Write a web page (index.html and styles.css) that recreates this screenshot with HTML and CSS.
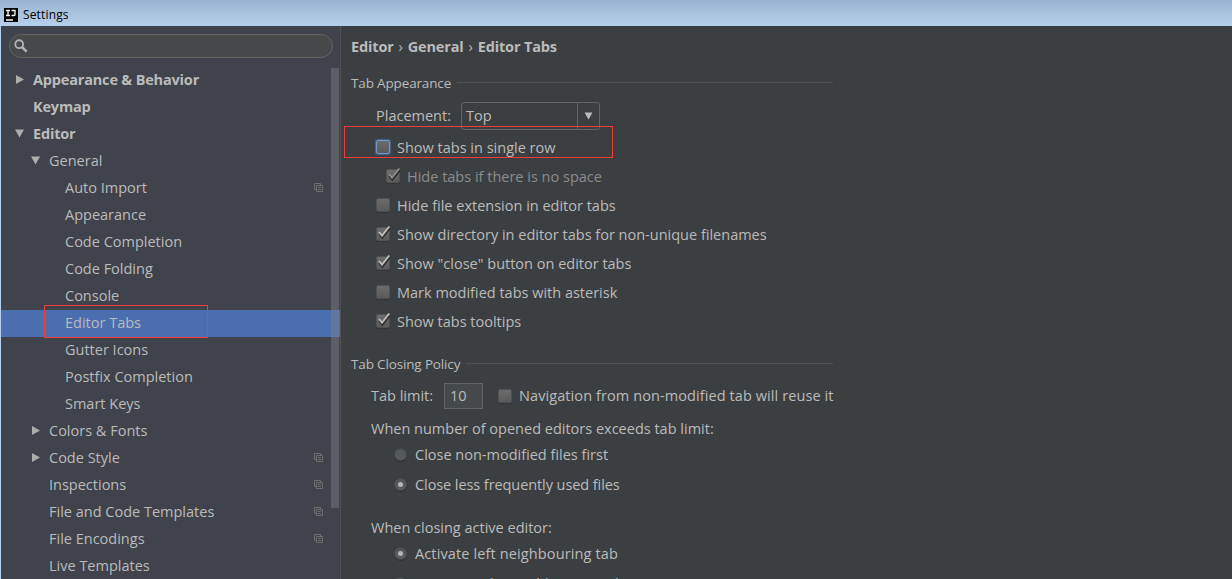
FILE: index.html
```
<!DOCTYPE html>
<html lang="en">
<head>
<meta charset="utf-8">
<title>Settings</title>
<link rel="stylesheet" href="styles.css">
</head>
<body>
<svg class="defs" width="0" height="0">
  <symbol id="copy" viewBox="0 0 9 9"><path d="M6.500 2V.5h-6v6H2M2.500 2.500h6v6h-6zM4 4.500h3M4 6.500h3" fill="none" stroke="currentColor"/></symbol>
  <symbol id="right" viewBox="0 0 9 9"><path d="M1 0v9L9 4.500z" fill="currentColor"/></symbol>
  <symbol id="down" viewBox="0 0 9 9"><path d="M0 .5h9L4.500 8.500z" fill="currentColor"/></symbol>
  <symbol id="tick" viewBox="0 0 16 16"><path d="M4 7.500l3 3.700L14.300 2" fill="none" stroke="#2b2b2b" stroke-width="2.200" transform="translate(.3 1.200)"/><path d="M4 7l3 3.700L14.300 1.500" fill="none" stroke="currentColor" stroke-width="1.900"/></symbol>
</svg>
<header class="titlebar">
  <svg class="logo" width="14" height="14" viewBox="0 0 14 14"><path d="M0 0h14v14H0z" fill="#000"/><path d="M2 2.500h4M4 2v6M2 7.500h4M7.500 2.500h3.500v4q0 1-1 1H7.500M2 12h7" fill="none" stroke="#fff" stroke-width="1.300"/></svg>
  <span>Settings</span>
</header>
<main class="window">
  <aside class="sidebar">
    <div class="search"><svg width="14" height="14" viewBox="0 0 14 14"><circle cx="5.200" cy="5.200" r="3.900" fill="none" stroke="#afb1b3" stroke-width="1.900"/><path d="M8 8l4.600 4.600" stroke="#afb1b3" stroke-width="2.500"/></svg></div>
    <nav class="tree">
      <div class="row top"><svg class="arrow"><use href="#right"/></svg><span>Appearance &amp; Behavior</span></div>
      <div class="row top"><i class="arrow"></i><span>Keymap</span></div>
      <div class="row top"><svg class="arrow"><use href="#down"/></svg><span>Editor</span></div>
      <div class="row mid"><svg class="arrow"><use href="#down"/></svg><span>General</span></div>
      <div class="row leaf"><span>Auto Import</span><svg class="copy"><use href="#copy"/></svg></div>
      <div class="row leaf"><span>Appearance</span></div>
      <div class="row leaf"><span>Code Completion</span></div>
      <div class="row leaf"><span>Code Folding</span></div>
      <div class="row leaf"><span>Console</span></div>
      <div class="row leaf selected"><span>Editor Tabs</span><b class="mark mark-tree"></b></div>
      <div class="row leaf"><span>Gutter Icons</span></div>
      <div class="row leaf"><span>Postfix Completion</span></div>
      <div class="row leaf"><span>Smart Keys</span></div>
      <div class="row mid"><svg class="arrow"><use href="#right"/></svg><span>Colors &amp; Fonts</span></div>
      <div class="row mid"><svg class="arrow"><use href="#right"/></svg><span>Code Style</span><svg class="copy"><use href="#copy"/></svg></div>
      <div class="row mid"><i class="arrow"></i><span>Inspections</span><svg class="copy"><use href="#copy"/></svg></div>
      <div class="row mid"><i class="arrow"></i><span>File and Code Templates</span><svg class="copy"><use href="#copy"/></svg></div>
      <div class="row mid"><i class="arrow"></i><span>File Encodings</span><svg class="copy"><use href="#copy"/></svg></div>
      <div class="row mid"><i class="arrow"></i><span>Live Templates</span></div>
    </nav>
    <div class="scrollbar"></div>
  </aside>
  <section class="content">
    <h1 class="crumbs">Editor <em>›</em> General <em>›</em> Editor Tabs</h1>
    <h2 class="group">Tab Appearance</h2>
    <div class="placement"><label>Placement:</label><div class="combo"><span>Top</span><div class="combo-btn"><svg width="9" height="8" viewBox="0 0 9 9"><use href="#down"/></svg></div></div></div>
    <div class="option"><i class="box focus"></i><span>Show tabs in single row</span><b class="mark mark-option"></b></div>
    <div class="option nested"><i class="box"><svg><use href="#tick"/></svg></i><span>Hide tabs if there is no space</span></div>
    <div class="option"><i class="box"></i><span>Hide file extension in editor tabs</span></div>
    <div class="option"><i class="box"><svg><use href="#tick"/></svg></i><span>Show directory in editor tabs for non-unique filenames</span></div>
    <div class="option"><i class="box"><svg><use href="#tick"/></svg></i><span>Show "close" button on editor tabs</span></div>
    <div class="option"><i class="box"></i><span>Mark modified tabs with asterisk</span></div>
    <div class="option"><i class="box"><svg><use href="#tick"/></svg></i><span>Show tabs tooltips</span></div>
    <h2 class="group closing">Tab Closing Policy</h2>
    <div class="limit"><label>Tab limit:</label><div class="field">10</div><i class="box"></i><span class="navigation">Navigation from non-modified tab will reuse it</span></div>
    <p class="question">When number of opened editors exceeds tab limit:</p>
    <div class="radio-row"><i class="radio"></i><span>Close non-modified files first</span></div>
    <div class="radio-row second"><i class="radio on"></i><span class="less">Close less frequently used files</span></div>
    <p class="question later">When closing active editor:</p>
    <div class="radio-row"><i class="radio on"></i><span class="left">Activate left neighbouring tab</span></div>
    <div class="radio-row second"><i class="radio"></i><span>Activate right neighbouring tab</span></div>
  </section>
</main>
</body>
</html>
```
FILE: styles.css
```
* { box-sizing: border-box; }
body { margin: 0; width: 1232px; height: 579px; overflow: hidden; background: #3c3f41; color: #bbb; font: 14.500px/20px "Open Sans", "Noto Sans", sans-serif; white-space: nowrap; }
.defs { display: block; height: 0; }
.titlebar { height: 26px; display: flex; align-items: center; gap: 5px; padding: 3px 0 0 4px; background: linear-gradient(#9ab3d0, #b7d0ea); color: #000; font-size: 12px; letter-spacing: .15px; }
.window { display: flex; height: 553px; overflow: hidden; border-left: 1px solid #b5d0ec; }
.sidebar { position: relative; width: 340px; flex: none; background: #40434b; border-right: 1px solid #515151; padding-top: 8px; }
.search { height: 24px; width: 324px; margin-left: 8px; border: 1px solid #646464; border-radius: 12px; background: #45494a; display: flex; align-items: center; padding-left: 4px; }
.tree { margin-top: 9px; }
.row { position: relative; height: 27px; display: flex; align-items: center; padding-bottom: 1px; }
.top { padding-left: 14px; font-weight: 700; letter-spacing: -.18px; }
.mid { padding-left: 30px; }
.leaf { padding-left: 64px; }
.arrow { width: 9px; height: 9px; margin: -1px 9px 0 0; flex: none; color: #adadad; }
.copy { width: 9px; height: 9px; margin: -2px 17px 0 auto; color: #6e6e6e; }
.selected { background: #4b6eaf; }
.scrollbar { position: absolute; right: 1px; top: 42px; width: 8px; height: 440px; background: rgba(130, 130, 140, .42); }
.mark { position: absolute; border: 1px solid #f23b3b; }
.mark-tree { left: 43px; top: -5px; width: 164px; height: 33px; }
.content { flex: 1; padding: 11px 0 0 10px; }
.crumbs { margin: 0; font-size: 14.500px; line-height: 20px; letter-spacing: -.15px; }
.crumbs em { font-style: normal; font-weight: 400; margin: 0 1.300px; }
.group { margin: 16px 0 0; width: 482px; display: flex; align-items: center; gap: 6px; font-size: 13.500px; font-weight: 400; line-height: 20px; letter-spacing: -.15px; }
.group::after { content: ""; flex: 1; height: 1px; margin-top: -2px; background: #515151; }
.closing { margin-top: 18px; }
.placement { display: flex; align-items: center; height: 28px; margin: 9px 0 3px 25px; }
.placement label { width: 85px; }
.combo { width: 139px; height: 28px; border: 1px solid #646464; border-radius: 3px; display: flex; align-items: center; padding-left: 4px; }
.combo span { flex: 1; }
.combo-btn { width: 22px; height: 26px; border-left: 1px solid #646464; display: flex; align-items: center; justify-content: center; padding-right: 1px; }
.option { position: relative; height: 29px; display: flex; align-items: center; gap: 7px; padding-left: 25px; }
.nested { padding-left: 35px; color: #8c8c8c; }
.box { position: relative; flex: none; width: 14px; height: 14px; border-radius: 2px; background: linear-gradient(#6c6c6c, #5a5a5a); border: 1px solid #505152; box-shadow: 0 1px 0 #323435; }
.option .box { margin-top: -1px; }
.box svg { position: absolute; left: -2px; top: -3px; width: 16px; height: 16px; color: #bbb; }
.nested .box svg { color: #8c8c8c; }
.focus { border-color: #6d9cc8; box-shadow: 0 0 1px 1px #44668e; }
.mark-option { left: -7px; top: -7px; width: 269px; height: 32px; }
.limit { display: flex; align-items: center; height: 26px; margin: 9px 0 0 20px; }
.limit label { width: 73px; }
.field { width: 39px; height: 26px; border: 1px solid #646464; background: #45494a; padding-left: 5px; line-height: 24px; margin-right: 15px; }
.limit > span { margin-left: 7px; }
.navigation { letter-spacing: .09px; }
.left { letter-spacing: .13px; }
.less { letter-spacing: -.08px; }
.question { margin: 10px 0 0 20px; }
.radio-row { display: flex; align-items: center; height: 20px; margin: 6px 0 0 43px; gap: 8px; }
.second { margin-top: 10px; }
.later { margin-top: 23px; }
.radio { width: 13px; height: 13px; margin-top: -1px; border-radius: 50%; background: linear-gradient(#515658, #5a5d5f); border: 1px solid #46494b; box-shadow: 0 1px 0 #303234; display: flex; align-items: center; justify-content: center; }
.on::after { content: ""; width: 5px; height: 5px; border-radius: 50%; background: #b5b5b5; }
```
